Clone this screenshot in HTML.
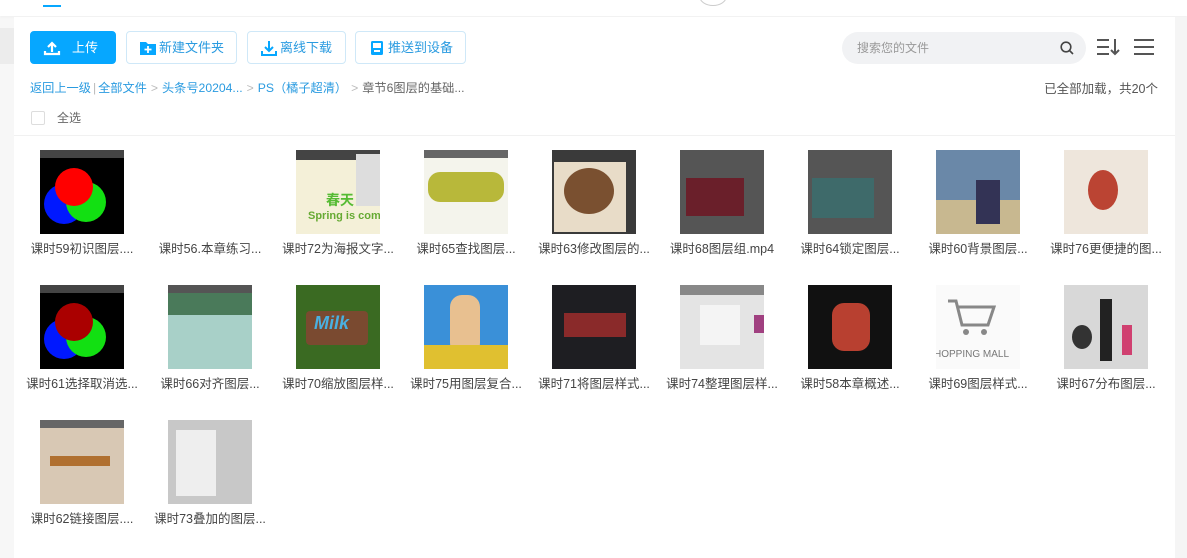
<!DOCTYPE html>
<html><head><meta charset="utf-8"><style>
*{margin:0;padding:0;box-sizing:border-box}
body{width:1187px;height:558px;overflow:hidden;background:#f7f7f7;font-family:"Liberation Sans","Noto Sans CJK SC",sans-serif;position:relative}
.top{position:absolute;left:0;top:0;width:1187px;height:16px;background:#fff;box-shadow:0 1px 3px rgba(0,0,0,.04)}
.tab{position:absolute;left:43px;top:5px;width:18px;height:2px;background:#06a7ff}
.circ{position:absolute;left:699px;top:-14px;width:28px;height:20px;border:1px solid #ccc;border-radius:50%;background:#fff}
.main{position:absolute;left:14px;top:17px;width:1161px;height:541px;background:#fff}
.side{position:absolute;left:0;top:28px;width:14px;height:36px;background:#ececec}
.btn{position:absolute;top:31px;height:33px;border:1px solid #cfe8f8;border-radius:4px;color:#2a9be0;font-size:13px;line-height:31px;padding-left:32px;background:#fff}
.btn svg{position:absolute;left:12px;top:8px}
.up{background:#06a7ff;color:#fff;border-color:#06a7ff;left:30px;width:86px;padding-left:41px}
.search{position:absolute;left:842px;top:32px;width:244px;height:32px;border-radius:16px;background:#f1f2f4;font-size:12px;color:#999;line-height:32px;padding-left:15px}
.crumb{position:absolute;left:30px;top:78px;font-size:12.2px;color:#2a9be0;white-space:nowrap}
.crumb .g{color:#bbb;margin:0 4px}
.crumb .d{color:#666}
.right{position:absolute;right:29px;top:78px;font-size:12.5px;color:#555}
.chk{position:absolute;left:31px;top:111px;width:14px;height:14px;border:1px solid #ddd;border-radius:2px}
.all{position:absolute;left:57px;top:109px;font-size:12px;color:#666}
.line{position:absolute;left:14px;top:135px;width:1161px;height:1px;background:#f1f1f1}
.it{position:absolute;width:128px}
.th{position:absolute;left:12px;top:0;width:84px;height:84px;overflow:hidden}
.lb{position:absolute;left:-10px;top:88px;width:128px;text-align:center;font-size:12.5px;color:#444;white-space:nowrap}
</style></head><body>
<div class="top"><div class="tab"></div><div class="circ"></div></div>
<div class="side"></div>
<div class="main"></div>
<div style="position:absolute;left:1175px;top:17px;width:12px;height:541px;background:#f5f5f5"></div>
<div class="btn up"><svg width="18" height="16" viewBox="0 0 18 16"><path d="M9 12V3M5 7l4-4 4 4M2 11v3h14v-3" stroke="#fff" stroke-width="2.2" fill="none"/></svg>上传</div>
<div class="btn" style="left:126px;width:111px"><svg width="18" height="16" viewBox="0 0 18 16"><path d="M1 2h6l2 2h8v11H1z" fill="#06a7ff"/><path d="M9 6v7M5.5 9.5h7" stroke="#fff" stroke-width="1.8"/></svg>新建文件夹</div>
<div class="btn" style="left:247px;width:99px"><svg width="18" height="16" viewBox="0 0 18 16"><path d="M9 1v10M5 7l4 4 4-4M2 11v4h14v-4" stroke="#06a7ff" stroke-width="2" fill="none"/></svg>离线下载</div>
<div class="btn" style="left:355px;width:111px"><svg width="18" height="16" viewBox="0 0 18 16"><rect x="3" y="1" width="12" height="14" rx="1.5" fill="#06a7ff"/><rect x="5" y="3" width="8" height="5" fill="#fff"/><rect x="6" y="10" width="6" height="2" fill="#fff"/></svg>推送到设备</div>
<div class="search">搜索您的文件<svg style="position:absolute;right:12px;top:9px" width="14" height="14" viewBox="0 0 14 14"><circle cx="6" cy="6" r="4.8" stroke="#444" stroke-width="1.6" fill="none"/><path d="M9.5 9.5L13 13" stroke="#444" stroke-width="1.6"/></svg></div>
<svg style="position:absolute;left:1096px;top:37px" width="26" height="20" viewBox="0 0 26 20"><path d="M1 3h12M1 10h12M1 17h12" stroke="#555" stroke-width="2"/><path d="M19 2v15M15 13l4 4 4-4" stroke="#555" stroke-width="2" fill="none"/></svg>
<svg style="position:absolute;left:1134px;top:37px" width="20" height="20" viewBox="0 0 20 20"><path d="M0 3h20M0 10h20M0 17h20" stroke="#555" stroke-width="2"/></svg>
<div class="crumb">返回上一级<span class="g" style="margin:0 2px">|</span>全部文件<span class="g">&gt;</span>头条号20204...<span class="g">&gt;</span>PS（橘子超清）<span class="g">&gt;</span><span class="d">章节6图层的基础...</span></div>
<div class="right">已全部加载，共20个</div>
<div class="chk"></div><div class="all">全选</div>
<div class="line"></div>

<div class="it" style="left:28px;top:150px"><div class="th" style="background:#000"><div style="height:8px;background:#444"></div><div style="position:absolute;left:4px;top:34px;width:40px;height:40px;border-radius:50%;background:#0018ff"></div><div style="position:absolute;left:26px;top:32px;width:40px;height:40px;border-radius:50%;background:#12e012"></div><div style="position:absolute;left:15px;top:18px;width:38px;height:38px;border-radius:50%;background:#f00"></div></div><div class="lb">课时59初识图层....</div></div>
<div class="it" style="left:156px;top:150px"><div class="lb">课时56.本章练习...</div></div>
<div class="it" style="left:284px;top:150px"><div class="th" style="background:#f4f0d8"><div style="height:10px;background:#444"></div><div style="position:absolute;right:0;top:4px;width:24px;height:52px;background:#ddd"></div><div style="position:absolute;left:12px;top:60px;font:bold 11px sans-serif;color:#6a3;white-space:nowrap">Spring is comi</div><div style="position:absolute;left:30px;top:40px;font:bold 14px 'Noto Sans CJK SC';color:#5b3">春天</div></div><div class="lb">课时72为海报文字...</div></div>
<div class="it" style="left:412px;top:150px"><div class="th" style="background:#f4f4ec"><div style="height:8px;background:#666"></div><div style="position:absolute;left:4px;top:22px;width:76px;height:30px;background:#b8b83a;border-radius:12px"></div></div><div class="lb">课时65查找图层...</div></div>
<div class="it" style="left:540px;top:150px"><div class="th" style="background:#3a3a3a"><div style="position:absolute;left:2px;top:12px;width:72px;height:70px;background:#e8dcc8"></div><div style="position:absolute;left:12px;top:18px;width:50px;height:46px;border-radius:50%;background:#7a5030"></div></div><div class="lb">课时63修改图层的...</div></div>
<div class="it" style="left:668px;top:150px"><div class="th" style="background:#555"><div style="position:absolute;left:6px;top:28px;width:58px;height:38px;background:#6a1f2a"></div></div><div class="lb">课时68图层组.mp4</div></div>
<div class="it" style="left:796px;top:150px"><div class="th" style="background:#555"><div style="position:absolute;left:4px;top:28px;width:62px;height:40px;background:#3e6a6a"></div></div><div class="lb">课时64锁定图层...</div></div>
<div class="it" style="left:924px;top:150px"><div class="th" style="background:#6a88a8"><div style="position:absolute;left:0;top:50px;width:84px;height:34px;background:#c8b890"></div><div style="position:absolute;left:40px;top:30px;width:24px;height:44px;background:#335"></div></div><div class="lb">课时60背景图层...</div></div>
<div class="it" style="left:1052px;top:150px"><div class="th" style="background:#eee6dc"><div style="position:absolute;left:24px;top:20px;width:30px;height:40px;border-radius:50%;background:#b43"></div></div><div class="lb">课时76更便捷的图...</div></div>

<div class="it" style="left:28px;top:285px"><div class="th" style="background:#000"><div style="height:8px;background:#444"></div><div style="position:absolute;left:4px;top:34px;width:40px;height:40px;border-radius:50%;background:#0018ff"></div><div style="position:absolute;left:26px;top:32px;width:40px;height:40px;border-radius:50%;background:#12e012"></div><div style="position:absolute;left:15px;top:18px;width:38px;height:38px;border-radius:50%;background:#a00"></div></div><div class="lb">课时61选择取消选...</div></div>
<div class="it" style="left:156px;top:285px"><div class="th" style="background:#a8d0c8"><div style="height:8px;background:#555"></div><div style="position:absolute;left:0;top:8px;width:84px;height:22px;background:#4a7a5a"></div></div><div class="lb">课时66对齐图层...</div></div>
<div class="it" style="left:284px;top:285px"><div class="th" style="background:#3a6a22"><div style="position:absolute;left:10px;top:26px;width:62px;height:34px;background:#7a4a30;border-radius:4px"></div><div style="position:absolute;left:18px;top:28px;font:bold italic 18px sans-serif;color:#4ab0e0">Milk</div></div><div class="lb">课时70缩放图层样...</div></div>
<div class="it" style="left:412px;top:285px"><div class="th" style="background:#3a90d8"><div style="position:absolute;left:26px;top:10px;width:30px;height:60px;background:#e8c090;border-radius:12px"></div><div style="position:absolute;left:0;top:60px;width:84px;height:24px;background:#e0c030"></div></div><div class="lb">课时75用图层复合...</div></div>
<div class="it" style="left:540px;top:285px"><div class="th" style="background:#1e1e22"><div style="position:absolute;left:12px;top:28px;width:62px;height:24px;background:#8a2a2a"></div></div><div class="lb">课时71将图层样式...</div></div>
<div class="it" style="left:668px;top:285px"><div class="th" style="background:#e4e4e4"><div style="height:10px;background:#888"></div><div style="position:absolute;left:20px;top:20px;width:40px;height:40px;background:#f4f4f4"></div><div style="position:absolute;right:0;top:30px;width:10px;height:18px;background:#a04080"></div></div><div class="lb">课时74整理图层样...</div></div>
<div class="it" style="left:796px;top:285px"><div class="th" style="background:#111"><div style="position:absolute;left:24px;top:18px;width:38px;height:48px;border-radius:12px;background:#b84030"></div></div><div class="lb">课时58本章概述...</div></div>
<div class="it" style="left:924px;top:285px"><div class="th" style="background:#fafafa"><svg style="position:absolute;left:10px;top:12px" width="50" height="40" viewBox="0 0 50 40"><path d="M2 4h8l6 24h26l6-18H12" stroke="#888" stroke-width="3" fill="none"/><circle cx="20" cy="35" r="3" fill="#888"/><circle cx="38" cy="35" r="3" fill="#888"/></svg><div style="position:absolute;left:-2px;top:64px;font-size:10px;color:#777;white-space:nowrap">HOPPING MALL</div></div><div class="lb">课时69图层样式...</div></div>
<div class="it" style="left:1052px;top:285px"><div class="th" style="background:#d8d8d8"><div style="position:absolute;left:36px;top:14px;width:12px;height:62px;background:#222"></div><div style="position:absolute;left:8px;top:40px;width:20px;height:24px;border-radius:50%;background:#333"></div><div style="position:absolute;left:58px;top:40px;width:10px;height:30px;background:#d04070"></div></div><div class="lb">课时67分布图层...</div></div>

<div class="it" style="left:28px;top:420px"><div class="th" style="background:#d8c8b4"><div style="height:8px;background:#666"></div><div style="position:absolute;left:10px;top:36px;width:60px;height:10px;background:#b07030"></div></div><div class="lb">课时62链接图层....</div></div>
<div class="it" style="left:156px;top:420px"><div class="th" style="background:#c8c8c8"><div style="position:absolute;left:8px;top:10px;width:40px;height:66px;background:#eee"></div></div><div class="lb">课时73叠加的图层...</div></div>
</body></html>
